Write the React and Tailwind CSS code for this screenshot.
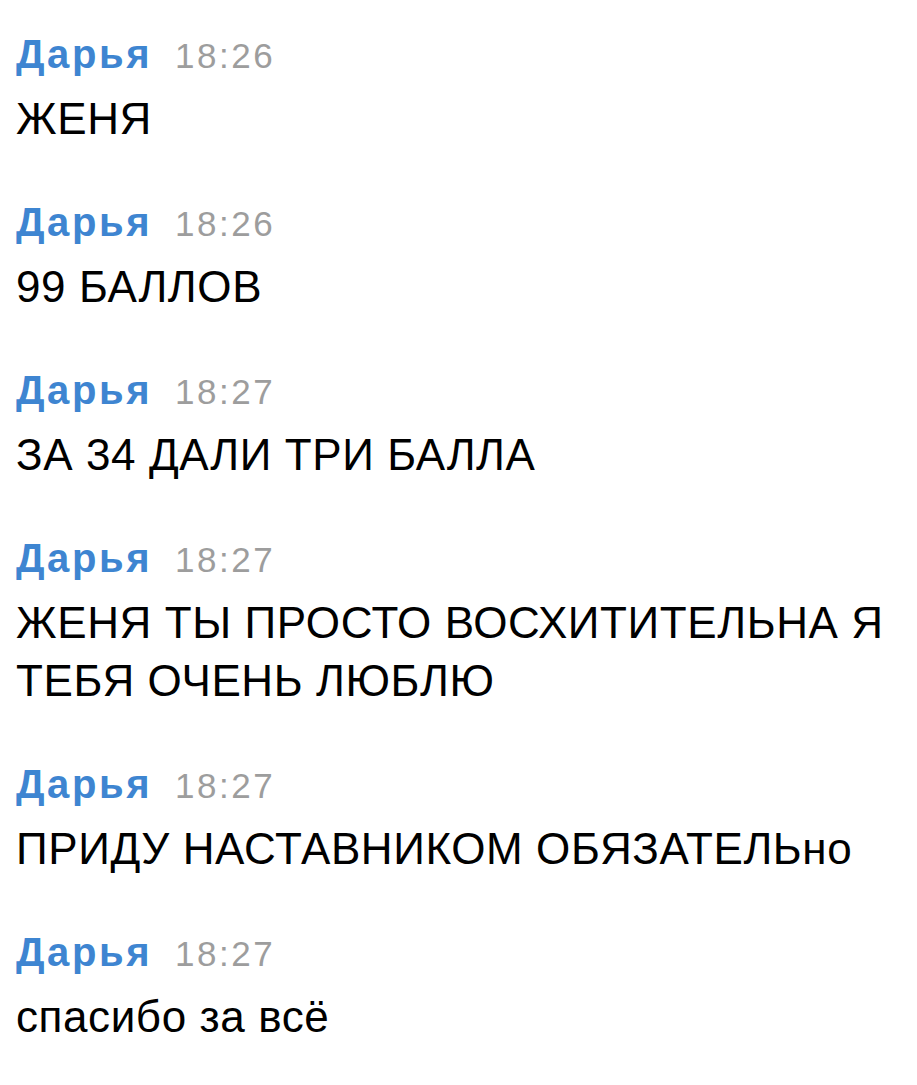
import React from 'react';

const messages = [
  { time: '18:26', text: 'ЖЕНЯ' },
  { time: '18:26', text: '99 БАЛЛОВ' },
  { time: '18:27', text: 'ЗА 34 ДАЛИ ТРИ БАЛЛА' },
  { time: '18:27', text: 'ЖЕНЯ ТЫ ПРОСТО ВОСХИТИТЕЛЬНА Я ТЕБЯ ОЧЕНЬ ЛЮБЛЮ' },
  { time: '18:27', text: 'ПРИДУ НАСТАВНИКОМ ОБЯЗАТЕЛЬно' },
  { time: '18:27', text: 'спасибо за всё' },
];

const App = () => {
  return (
    <div className="min-h-screen w-[917px] h-[1085px] bg-white overflow-hidden pl-[16px] pr-[30px] pt-[25px] font-['Liberation_Sans',Arial,sans-serif]">
      <div className="flex flex-col gap-[45px]">
        {messages.map((m, i) => (
          <div key={i}>
            <div className="flex items-baseline gap-[23px] h-[58px] leading-[58px]">
              <span className="text-[40px] font-bold tracking-[2.6px] text-[#3e85d1]">Дарья</span>
              <span className="text-[35px] tracking-[2.5px] text-[#9d9d9d]">{m.time}</span>
            </div>
            <div className="mt-[7px] text-[44px] tracking-[0.6px] leading-[58px] text-black">{m.text}</div>
          </div>
        ))}
      </div>
    </div>
  );
};

export default App;
